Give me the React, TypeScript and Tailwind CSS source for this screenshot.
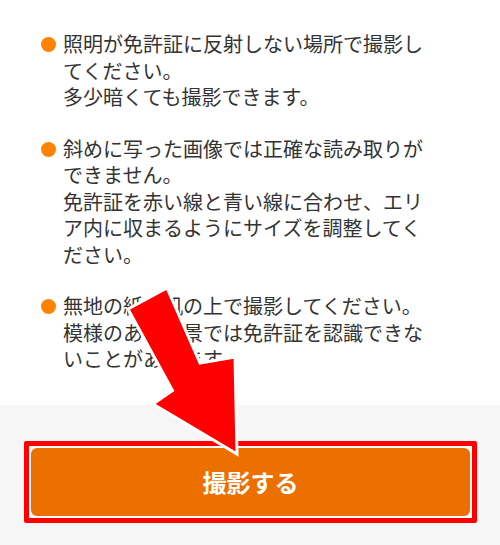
const items = [
  ["照明が免許証に反射しない場所で撮影してください。", "多少暗くても撮影できます。"],
  [
    "斜めに写った画像では正確な読み取りができません。",
    "免許証を赤い線と青い線に合わせ、エリア内に収まるようにサイズを調整してください。",
  ],
  ["無地の紙や机の上で撮影してください。", "模様のある背景では免許証を認識できないことがあります。"],
];

export default function App() {
  return (
    <div
      className="relative w-[500px] h-[545px] overflow-hidden bg-white"
      style={{ fontFamily: '"Noto Sans CJK JP", "Noto Sans", sans-serif' }}
    >
      {/* Tips */}
      <div className="h-[405px] pt-[31px] pl-[41px] flex flex-col gap-[25px]">
        {items.map((lines, i) => (
          <div key={i} className="flex items-start gap-[7px]">
            <span className="mt-[6px] w-[15px] h-[15px] rounded-full bg-[#ff8200] shrink-0" />
            <div className="w-[372px] text-[20px] leading-[26.5px] text-[#333333]">
              {lines.map((l, j) => (
                <p key={j}>{l}</p>
              ))}
            </div>
          </div>
        ))}
      </div>

      {/* Footer */}
      <div className="h-[140px] bg-[#f6f6f6] pt-[36px] pl-[24px]">
        <div className="w-[453px] h-[82px] border-[5px] border-[#ff0000] rounded-[2px] bg-white p-[2px]">
          <button className="w-full h-full rounded-[6px] bg-[#eb7000] text-white text-[24px] font-bold">
            撮影する
          </button>
        </div>
      </div>

      {/* Arrow annotation */}
      <svg className="absolute inset-0 pointer-events-none" width="500" height="545" viewBox="0 0 500 545">
        <polygon
          points="128,309 167,288 200,363 235,357 237,454 153,404 172.5,390.5"
          fill="#ff0000"
          stroke="#ffffff"
          strokeWidth="3"
          strokeLinejoin="miter"
        />
      </svg>
    </div>
  );
}
